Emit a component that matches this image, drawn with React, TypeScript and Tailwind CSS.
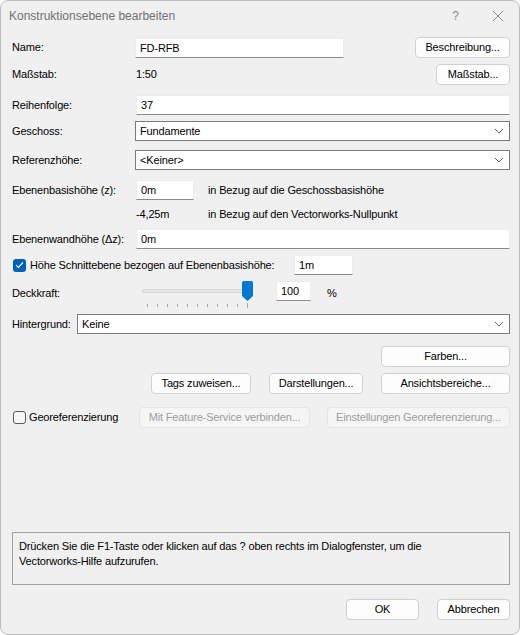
import React from "react"

const font = { fontFamily: '"Liberation Sans", Arial, sans-serif' }

function Btn({ children, className = "", disabled = false }: { children: React.ReactNode; className?: string; disabled?: boolean }) {
  return (
    <div
      className={
        "flex h-[21px] items-center justify-center rounded-[4px] border text-[11px] " +
        (disabled
          ? "border-[#e5e5e5] bg-[#f5f5f5] text-[#9d9d9d] "
          : "border-[#d0d0d0] bg-[#fdfdfd] text-black ") +
        className
      }
    >
      {children}
    </div>
  )
}

function TextInput({ value, className = "" }: { value: string; className?: string }) {
  return (
    <div className={"flex h-[20px] items-center border-b border-b-[#8a8a8a] border-x border-t border-x-[#ececec] border-t-[#ececec] bg-white pl-[4px] text-[11px] " + className}>
      {value}
    </div>
  )
}

function Select({ value, className = "" }: { value: string; className?: string }) {
  return (
    <div className={"flex h-[20px] items-center justify-between border border-[#7a7a7a] bg-white pl-[4px] pr-[5px] text-[11px] " + className}>
      <span>{value}</span>
      <svg width="10" height="6" viewBox="0 0 10 6" fill="none">
        <path d="M1 1l4 4 4-4" stroke="#606060" strokeWidth="1" />
      </svg>
    </div>
  )
}

export default function App() {
  const ticks = Array.from({ length: 11 })
  return (
    <div style={font} className="relative flex h-[635px] w-[520px] flex-col overflow-hidden rounded-[8px] border border-[#bdbdbd] bg-[#f0f0f0] text-[11px] tracking-[-0.15px] text-black">
      {/* title bar */}
      <div className="flex h-[29px] items-center justify-between pl-[8px] tracking-normal">
        <span className="text-[12px] text-[#707070]">Konstruktionsebene bearbeiten</span>
        <div className="flex items-center">
          <span className="mr-[33px] text-[12px] text-[#8a8a8a]">?</span>
          <svg width="12" height="12" viewBox="0 0 12 12" className="mr-[15px]">
            <path d="M1 1l10 10M11 1L1 11" stroke="#8a8a8a" strokeWidth="1" />
          </svg>
        </div>
      </div>

      <div className="flex flex-1 flex-col pl-[11px] pr-[9px]">
        {/* Name */}
        <div className="mt-[7px] flex h-[21px] items-center">
          <span className="w-[123px]">Name:</span>
          <TextInput value="FD-RFB" className="mt-[1px] w-[209px]" />
          <div className="flex-1" />
          <Btn className="w-[95px]">Beschreibung...</Btn>
        </div>

        {/* Maßstab */}
        <div className="mt-[6px] flex h-[21px] items-center">
          <span className="w-[124px]">Maßstab:</span>
          <span>1:50</span>
          <div className="flex-1" />
          <Btn className="w-[74px]">Maßstab...</Btn>
        </div>

        {/* Reihenfolge */}
        <div className="mt-[10px] flex h-[20px] items-center">
          <span className="w-[124px]">Reihenfolge:</span>
          <TextInput value="37" className="flex-1" />
        </div>

        {/* Geschoss */}
        <div className="mt-[6px] flex h-[20px] items-center">
          <span className="w-[123px]">Geschoss:</span>
          <Select value="Fundamente" className="flex-1" />
        </div>

        {/* Referenzhöhe */}
        <div className="mt-[9px] flex h-[20px] items-center">
          <span className="w-[123px]">Referenzhöhe:</span>
          <Select value="<Keiner>" className="flex-1" />
        </div>

        {/* Ebenenbasishöhe */}
        <div className="mt-[10px] flex h-[20px] items-center">
          <span className="w-[124px]">Ebenenbasishöhe (z):</span>
          <TextInput value="0m" className="w-[58px]" />
          <span className="ml-[14px]">in Bezug auf die Geschossbasishöhe</span>
        </div>

        {/* Nullpunkt */}
        <div className="mt-[5px] flex h-[18px] items-center">
          <span className="ml-[124px] w-[72px]">-4,25m</span>
          <span>in Bezug auf den Vectorworks-Nullpunkt</span>
        </div>

        {/* Ebenenwandhöhe */}
        <div className="mt-[6px] flex h-[20px] items-center">
          <span className="w-[124px]">Ebenenwandhöhe (Δz):</span>
          <TextInput value="0m" className="flex-1" />
        </div>

        {/* Schnittebene */}
        <div className="mt-[6px] flex h-[20px] items-center">
          <div className="mr-[4px] ml-[1px] flex h-[13px] w-[13px] items-center justify-center rounded-[3px] bg-[#005fb8]">
            <svg width="9" height="8" viewBox="0 0 9 8" fill="none">
              <path d="M1 4.2l2.3 2.3L8 1.5" stroke="white" strokeWidth="1.1" />
            </svg>
          </div>
          <span className="w-[264px]">Höhe Schnittebene bezogen auf Ebenenbasishöhe:</span>
          <TextInput value="1m" className="w-[59px]" />
        </div>

        {/* Deckkraft */}
        <div className="mt-[6px] flex h-[27px] items-start">
          <span className="mt-[4px] w-[130px]">Deckkraft:</span>
          <div className="relative h-[27px] w-[113px]">
            <div className="absolute left-0 top-[8px] h-[4px] w-[110px] rounded-[1px] border border-[#d6d6d6] bg-[#e7e7e7]" />
            <svg width="11" height="20" viewBox="0 0 11 20" className="absolute left-[100px] top-0">
              <path d="M0 1.5Q0 0 1.5 0h8Q11 0 11 1.5V15l-5.5 5L0 15z" fill="#0078d4" />
            </svg>
            {ticks.map((_, i) => (
              <div
                key={i}
                className={"absolute w-px bg-[#a8a8a8] " + (i === 10 ? "top-[22px] h-[5px]" : "top-[23px] h-[3px]")}
                style={{ left: 5 + i * 10 }}
              />
            ))}
          </div>
          <TextInput value="100" className="ml-[21px] w-[35px]" />
          <span className="ml-[16px] mt-[4px]">%</span>
        </div>

        {/* Hintergrund */}
        <div className="mt-[6px] flex h-[20px] items-center">
          <span className="w-[65px]">Hintergrund:</span>
          <Select value="Keine" className="flex-1" />
        </div>

        {/* Farben */}
        <div className="mt-[12px] flex h-[21px] justify-end">
          <Btn className="w-[129px]">Farben...</Btn>
        </div>

        {/* Tags row */}
        <div className="mt-[6px] flex h-[21px] justify-end gap-[18px]">
          <Btn className="w-[100px]">Tags zuweisen...</Btn>
          <Btn className="w-[94px]">Darstellungen...</Btn>
          <Btn className="w-[129px]">Ansichtsbereiche...</Btn>
        </div>

        {/* Georeferenzierung */}
        <div className="mt-[13px] flex h-[20px] items-center">
          <div className="ml-[1px] mr-[3px] h-[13px] w-[13px] rounded-[3px] border border-[#5a5a5a] bg-[#f7f7f7]" />
          <span className="w-[110px]">Georeferenzierung</span>
          <Btn disabled className="h-[20px] w-[171px]">Mit Feature-Service verbinden...</Btn>
          <div className="flex-1" />
          <Btn disabled className="h-[20px] w-[183px]">Einstellungen Georeferenzierung...</Btn>
        </div>

        <div className="flex-1" />

        {/* help */}
        <div className="h-[53px] border border-[#a0a0a0] px-[6px] pt-[6px] leading-[15px]">
          Drücken Sie die F1-Taste oder klicken auf das ? oben rechts im Dialogfenster, um die
          <br />
          Vectorworks-Hilfe aufzurufen.
        </div>

        {/* OK row */}
        <div className="mb-[14px] mt-[14px] flex h-[21px] justify-end gap-[18px]">
          <Btn className="w-[73px]">OK</Btn>
          <Btn className="w-[73px]">Abbrechen</Btn>
        </div>
      </div>
    </div>
  )
}
